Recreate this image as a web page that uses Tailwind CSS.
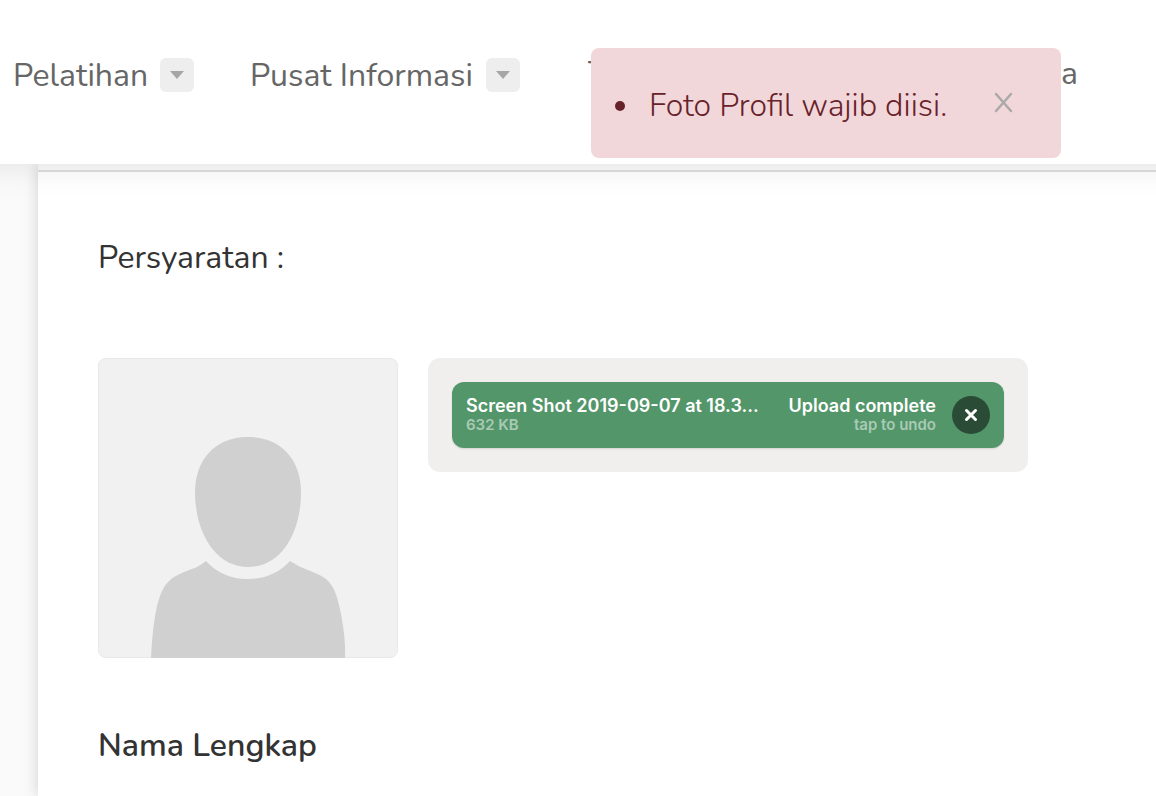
<!DOCTYPE html>
<html lang="id">
<head>
<meta charset="utf-8">
<meta name="viewport" content="width=device-width, initial-scale=1">
<title>Persyaratan</title>
<script src="https://cdn.jsdelivr.net/npm/@tailwindcss/browser@4"></script>
</head>
<body class="flex min-h-screen flex-col overflow-hidden bg-[#fafafa] font-['Nunito','Lato',sans-serif] text-[32px] leading-[44px] text-[#333]">
<header class="relative z-10 h-[164px] bg-white shadow-[0_-40px_32px_40px_rgba(0,0,0,0.11)]">
  <nav class="flex items-start pt-[54px] pl-[13px] text-[#666]" aria-label="Utama">
    <div class="flex w-[237px] shrink-0 items-center gap-3">
      <a href="#">Pelatihan</a>
      <button type="button" aria-label="Buka menu Pelatihan" class="-mt-0.5 flex size-[34px] items-center justify-center rounded-md bg-[#eee]"><svg class="h-2 w-[14px]" viewBox="0 0 14 8" fill="#a6a6a6"><path d="M0 0h14L7 8z"/></svg></button>
    </div>
    <div class="flex w-[338px] shrink-0 items-center gap-[13px]">
      <a href="#">Pusat Informasi</a>
      <button type="button" aria-label="Buka menu Pusat Informasi" class="-mt-0.5 flex size-[34px] items-center justify-center rounded-md bg-[#eee]"><svg class="h-2 w-[14px]" viewBox="0 0 14 8" fill="#a6a6a6"><path d="M0 0h14L7 8z"/></svg></button>
    </div>
    <div class="-mt-0.5 flex w-[490px] shrink-0 justify-between">
      <a href="#">T</a>
      <a href="#">ya</a>
    </div>
  </nav>
  <div role="alert" class="absolute top-12 left-[591px] flex h-[110px] w-[470px] items-center justify-between rounded-lg bg-[#f2d7da] pr-12 pl-6 text-[#68222a]">
    <ul class="flex items-center pt-1.5 font-light"><li class="flex items-center gap-6"><span class="size-[10px] rounded-full bg-[#68222a]"></span>Foto Profil wajib diisi.</li></ul>
    <button type="button" aria-label="Tutup" class="-mt-0.5"><svg class="h-[21px] w-[19px]" viewBox="0 0 19 21" fill="none" stroke="#a9a9a9" stroke-width="2.5" stroke-linecap="round"><path d="M2 2l15 17M17 2L2 19"/></svg></button>
  </div>
</header>
<main class="ml-[38px] flex-1 bg-white shadow-[0_0_14px_rgba(0,0,0,0.17)]">
  <div class="h-2 border-b-2 border-[#dedede] bg-[#fafafa]"></div>
  <form class="px-[60px] pt-16">
    <h2>Persyaratan :</h2>
    <div class="mt-[78px] flex items-start gap-[30px]">
      <svg class="size-[300px] shrink-0 rounded-lg" viewBox="0 0 300 300" role="img" aria-label="Foto profil">
        <rect width="300" height="300" fill="#f1f1f1"/>
        <rect x=".5" y=".5" width="299" height="299" rx="7.5" fill="none" stroke="#e8e8e8"/>
        <path d="M150 79C184 79 203 103 203 134C203 174 184 209 150 209C117 209 97 174 97 134C97 103 116 79 150 79Z" fill="#d0d0d0"/>
        <path d="M53 300C54 276 57 251 62 238C67 224 74 219 86 214C94 211 101 209 108 203C119 215 133 221 150 221C167 221 181 215 192 203C201 209 208 211 217 215C230 220 236 227 240 243C244 258 248 282 247 300Z" fill="#d0d0d0"/>
      </svg>
      <div class="w-[600px] rounded-xl bg-[#f1efee] p-6 font-['Inter',sans-serif]">
        <div class="flex h-[66px] items-center rounded-xl bg-[#53966a] px-[14px] font-semibold whitespace-nowrap text-white shadow-[0_1px_2px_rgba(0,0,0,0.12)]">
          <div class="flex-1">
            <p class="text-[18px] leading-5">Screen Shot 2019-09-07 at 18.3...</p>
            <p class="text-[15px] leading-[18px] text-white/50">632 KB</p>
          </div>
          <div class="text-right">
            <p class="text-[18px] leading-5">Upload complete</p>
            <p class="text-[15px] leading-[18px] text-white/50">tap to undo</p>
          </div>
          <button type="button" aria-label="Batalkan unggahan" class="ml-4 flex size-[38px] items-center justify-center rounded-full bg-[#2a4b35]"><svg class="size-[14px]" viewBox="0 0 14 14" fill="none" stroke="#fff" stroke-width="3" stroke-linecap="round"><path d="M2.500 2.500l9 9M11.500 2.500l-9 9"/></svg></button>
        </div>
      </div>
    </div>
    <h3 class="mt-[66px] font-semibold">Nama Lengkap</h3>
  </form>
</main>
</body>
</html>
